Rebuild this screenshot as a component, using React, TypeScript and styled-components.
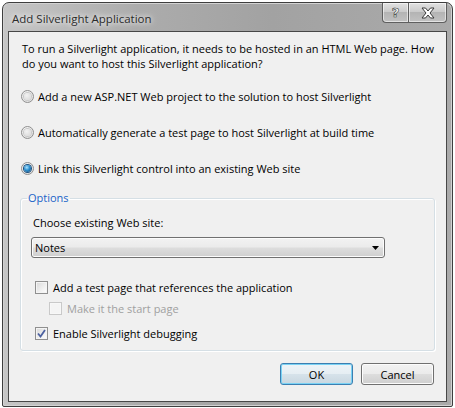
import * as React from 'react';
import styled, { createGlobalStyle } from 'styled-components';

const GlobalStyle = createGlobalStyle`
  html, body {
    margin: 0;
    padding: 0;
    background: #ffffff;
  }
  body {
    font-family: "Open Sans", "Noto Sans", sans-serif;
    font-size: 11px;
    color: #000;
  }
`;

const RadioDot = ({ checked }: { checked?: boolean }) => (
  <RadioOuter>
    <RadioInner checked={checked} />
  </RadioOuter>
);

const CheckBox = ({ checked, disabled }: { checked?: boolean; disabled?: boolean }) => (
  <CheckOuter disabled={disabled}>
    {checked && (
      <svg width="9" height="9" viewBox="0 0 9 9">
        <path d="M1 4.5 L3.5 7.5 L8 1" fill="none" stroke="#4c61a0" strokeWidth="1.8" />
      </svg>
    )}
  </CheckOuter>
);

const App = () => {
  const [choice, setChoice] = React.useState(2);
  const options = [
    'Add a new ASP.NET Web project to the solution to host Silverlight',
    'Automatically generate a test page to host Silverlight at build time',
    'Link this Silverlight control into an existing Web site',
  ];

  return (
    <>
      <GlobalStyle />
      <Frame>
        <TitleBar>
          <Title>Add Silverlight Application</Title>
          <CaptionButtons>
            <CaptionButton side="left">
              <HelpGlyph>?</HelpGlyph>
            </CaptionButton>
            <CaptionButton side="right" wide>
              <svg width="16" height="12" viewBox="0 0 16 12">
                <path
                  d="M2 1 L5.5 1 L8 4 L10.5 1 L14 1 L10 6 L14 11 L10.5 11 L8 8 L5.5 11 L2 11 L6 6 Z"
                  fill="#ffffff"
                  stroke="#3a3a3a"
                  strokeWidth="1"
                />
              </svg>
            </CaptionButton>
          </CaptionButtons>
        </TitleBar>
        <Client>
          <Intro>
            To run a Silverlight application, it needs to be hosted in an HTML Web page. How
            <br />
            do you want to host this Silverlight application?
          </Intro>
          <RadioList>
            {options.map((opt, i) => (
              <RadioRow key={opt} onClick={() => setChoice(i)}>
                <RadioDot checked={choice === i} />
                <span>{opt}</span>
              </RadioRow>
            ))}
          </RadioList>
          <GroupBox>
            <Legend>Options</Legend>
            <FieldLabel>Choose existing Web site:</FieldLabel>
            <Combo>
              <span>Notes</span>
              <svg width="7" height="4" viewBox="0 0 7 4">
                <path d="M0 0 L7 0 L3.5 4 Z" fill="#000" />
              </svg>
            </Combo>
            <CheckList>
              <CheckRow>
                <CheckBox />
                <span>Add a test page that references the application</span>
              </CheckRow>
              <CheckRow indent disabled>
                <CheckBox disabled />
                <span>Make it the start page</span>
              </CheckRow>
              <CheckRow spaced>
                <CheckBox checked />
                <span>Enable Silverlight debugging</span>
              </CheckRow>
            </CheckList>
          </GroupBox>
          <ButtonRow>
            <PushButton isDefault>OK</PushButton>
            <PushButton>Cancel</PushButton>
          </ButtonRow>
        </Client>
      </Frame>
    </>
  );
};

export default App;

const Frame = styled.div`
  box-sizing: border-box;
  margin: 2px 0 0 2px;
  width: 451px;
  height: 405px;
  border: 1px solid #3e3e3e;
  border-radius: 7px 7px 2px 2px;
  padding: 0 5px 4px 5px;
  display: flex;
  flex-direction: column;
  background: linear-gradient(90deg, #c6c6c6 0%, #acacac 30%, #a2a2a2 60%, #aaaaaa 100%);
  box-shadow: inset 0 0 0 1px #d2d2d2;
`;

const TitleBar = styled.div`
  height: 28px;
  display: flex;
  justify-content: space-between;
  align-items: flex-start;
`;

const Title = styled.div`
  margin: 8px 0 0 4px;
  font-size: 11.5px;
  color: #2b2b2b;
  text-shadow: 0 0 8px #f4f4f4, 0 0 4px #eeeeee;
`;

const CaptionButtons = styled.div`
  display: flex;
`;

const CaptionButton = styled.div<{ side: 'left' | 'right'; wide?: boolean }>`
  box-sizing: border-box;
  width: ${(p) => (p.wide ? 39 : 26)}px;
  height: 20px;
  display: flex;
  align-items: center;
  justify-content: center;
  border: 1px solid #5f5f5f;
  border-top: none;
  ${(p) => (p.side === 'left' ? 'border-right: none;' : '')}
  border-radius: ${(p) => (p.side === 'left' ? '0 0 0 4px' : '0 0 4px 0')};
  background: linear-gradient(180deg, #e2e2e2 0%, #cbcbcb 45%, #b4b4b4 50%, #c2c2c2 100%);
  box-shadow: inset 0 0 0 1px rgba(255, 255, 255, 0.55);
`;

const HelpGlyph = styled.span`
  font-family: "DejaVu Sans", sans-serif;
  font-size: 13px;
  font-weight: bold;
  color: #ffffff;
  -webkit-text-stroke: 0.6px #3a3a3a;
  line-height: 1;
`;

const Client = styled.div`
  flex: 1;
  box-sizing: border-box;
  border: 1px solid #474747;
  background: #f0f0f0;
  padding: 9px 12px 0 12px;
  display: flex;
  flex-direction: column;
`;

const Intro = styled.p`
  margin: 0;
  line-height: 15px;
  white-space: nowrap;
  padding-left: 1px;
`;

const RadioList = styled.div`
  display: flex;
  flex-direction: column;
  gap: 21px;
  margin-top: 18px;
`;

const RadioRow = styled.label`
  display: flex;
  align-items: center;
  gap: 4px;
  height: 15px;
  cursor: default;
`;

const RadioOuter = styled.span`
  box-sizing: border-box;
  width: 13px;
  height: 13px;
  border-radius: 50%;
  border: 1px solid #8f8f8f;
  background: radial-gradient(circle at 40% 35%, #ffffff 0%, #e2e2e2 70%, #cfcfcf 100%);
  display: flex;
  align-items: center;
  justify-content: center;
`;

const RadioInner = styled.span<{ checked?: boolean }>`
  width: 7px;
  height: 7px;
  border-radius: 50%;
  background: ${(p) =>
    p.checked
      ? 'radial-gradient(circle at 40% 35%, #aee3ff 0%, #2a8fd0 45%, #10436f 100%)'
      : 'radial-gradient(circle at 40% 35%, #f2f2f2 0%, #d6d6d6 100%)'};
  box-shadow: ${(p) => (p.checked ? '0 0 0 1px #1c4f7d' : '0 0 0 1px #c8c8c8')};
`;

const GroupBox = styled.fieldset`
  box-sizing: border-box;
  margin: 15px 0 0 -1px;
  width: 415px;
  height: 160px;
  border: 1px solid #d5dfe5;
  border-radius: 3px;
  box-shadow: inset 1px 1px 0 #ffffff, 1px 1px 0 #ffffff;
  padding: 4px 0 0 11px;
  min-inline-size: auto;
`;

const Legend = styled.legend`
  color: #1a64c8;
  padding: 0 1px;
  margin-left: -5px;
  line-height: 14px;
`;

const FieldLabel = styled.div`
  line-height: 15px;
  margin: 6px 0 0 1px;
`;

const Combo = styled.div`
  box-sizing: border-box;
  margin: 7px 0 0 -1px;
  width: 354px;
  height: 21px;
  border: 1px solid #707070;
  border-radius: 3px;
  background: linear-gradient(180deg, #f2f2f2 0%, #ebebeb 48%, #dddddd 52%, #cfcfcf 100%);
  box-shadow: inset 0 0 0 1px #fcfcfc;
  display: flex;
  align-items: center;
  justify-content: space-between;
  padding: 0 5px 0 3px;
`;

const CheckList = styled.div`
  display: flex;
  flex-direction: column;
  margin-top: 22px;
  gap: 6px;
`;

const CheckRow = styled.div<{ indent?: boolean; disabled?: boolean; spaced?: boolean }>`
  display: flex;
  align-items: center;
  gap: 5px;
  height: 15px;
  margin-left: ${(p) => (p.indent ? 17 : 3)}px;
  margin-top: ${(p) => (p.spaced ? 4 : 0)}px;
  color: ${(p) => (p.disabled ? '#a0a0a0' : '#000')};
`;

const CheckOuter = styled.span<{ disabled?: boolean }>`
  box-sizing: border-box;
  width: 13px;
  height: 13px;
  border: 1px solid ${(p) => (p.disabled ? '#c9c9c9' : '#8f8f8f')};
  background: ${(p) =>
    p.disabled
      ? '#f4f4f4'
      : 'linear-gradient(135deg, #d8d8d8 0%, #f0f0f0 60%, #ffffff 100%)'};
  box-shadow: inset 0 0 0 1px ${(p) => (p.disabled ? '#f7f7f7' : '#f4f4f4')};
  display: flex;
  align-items: center;
  justify-content: center;
`;

const ButtonRow = styled.div`
  display: flex;
  justify-content: flex-end;
  gap: 8px;
  margin-top: 12px;
`;

const PushButton = styled.button<{ isDefault?: boolean }>`
  box-sizing: border-box;
  width: 73px;
  height: 22px;
  font-family: inherit;
  font-size: 11px;
  color: #000;
  border: 1px solid ${(p) => (p.isDefault ? '#3c7fb1' : '#707070')};
  border-radius: 3px;
  background: ${(p) =>
    p.isDefault
      ? 'linear-gradient(180deg, #eef4f8 0%, #e6eef3 48%, #d6e2ea 52%, #c9d7e0 100%)'
      : 'linear-gradient(180deg, #f2f2f2 0%, #ebebeb 48%, #dddddd 52%, #cfcfcf 100%)'};
  box-shadow: inset 0 0 0 1px ${(p) => (p.isDefault ? '#7ad2f4' : '#fcfcfc')};
  padding: 0;
`;
